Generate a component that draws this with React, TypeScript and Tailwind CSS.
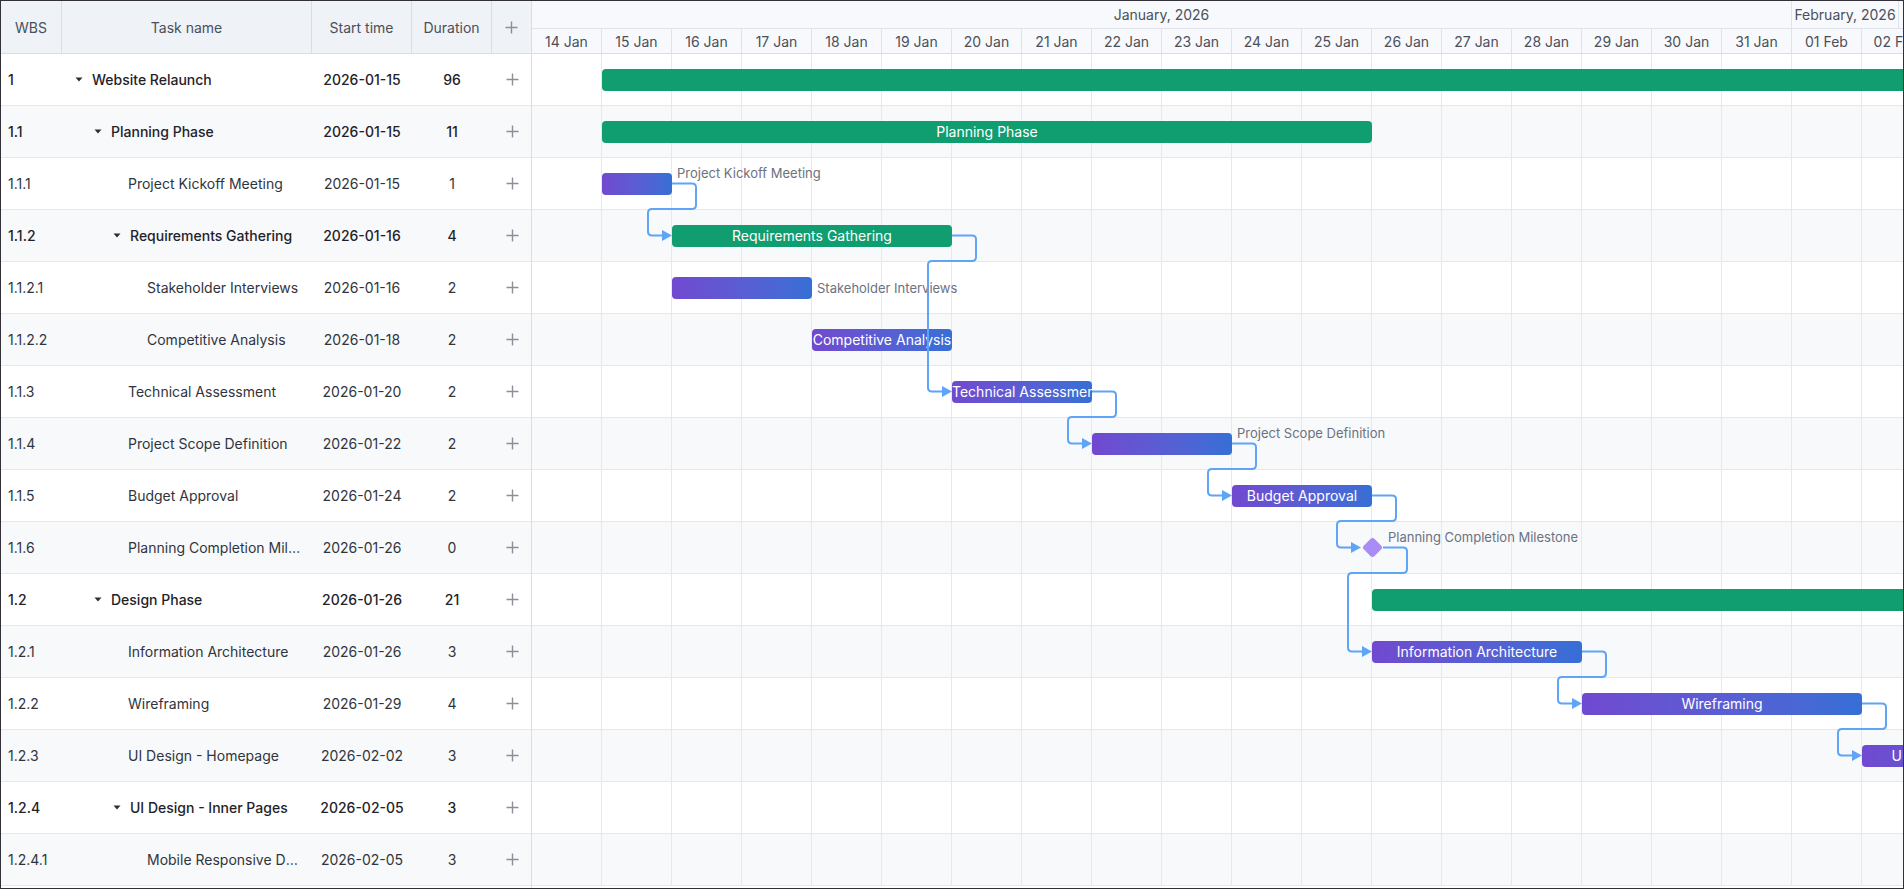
import type { ReactNode } from 'react';

type Task = {
  wbs: string;
  name: string;
  start: string;
  dur: number;
  level: number;
  parent?: boolean;
  milestone?: boolean;
  label?: 'up' | 'mid';
};

const TASKS: Task[] = [
  { wbs: '1', name: 'Website Relaunch', start: '2026-01-15', dur: 96, level: 0, parent: true },
  { wbs: '1.1', name: 'Planning Phase', start: '2026-01-15', dur: 11, level: 1, parent: true },
  { wbs: '1.1.1', name: 'Project Kickoff Meeting', start: '2026-01-15', dur: 1, level: 2, label: 'up' },
  { wbs: '1.1.2', name: 'Requirements Gathering', start: '2026-01-16', dur: 4, level: 2, parent: true },
  { wbs: '1.1.2.1', name: 'Stakeholder Interviews', start: '2026-01-16', dur: 2, level: 3, label: 'mid' },
  { wbs: '1.1.2.2', name: 'Competitive Analysis', start: '2026-01-18', dur: 2, level: 3 },
  { wbs: '1.1.3', name: 'Technical Assessment', start: '2026-01-20', dur: 2, level: 2 },
  { wbs: '1.1.4', name: 'Project Scope Definition', start: '2026-01-22', dur: 2, level: 2, label: 'up' },
  { wbs: '1.1.5', name: 'Budget Approval', start: '2026-01-24', dur: 2, level: 2 },
  { wbs: '1.1.6', name: 'Planning Completion Milestone', start: '2026-01-26', dur: 0, level: 2, milestone: true, label: 'up' },
  { wbs: '1.2', name: 'Design Phase', start: '2026-01-26', dur: 21, level: 1, parent: true },
  { wbs: '1.2.1', name: 'Information Architecture', start: '2026-01-26', dur: 3, level: 2 },
  { wbs: '1.2.2', name: 'Wireframing', start: '2026-01-29', dur: 4, level: 2 },
  { wbs: '1.2.3', name: 'UI Design - Homepage', start: '2026-02-02', dur: 3, level: 2 },
  { wbs: '1.2.4', name: 'UI Design - Inner Pages', start: '2026-02-05', dur: 3, level: 2, parent: true },
  { wbs: '1.2.4.1', name: 'Mobile Responsive Design', start: '2026-02-05', dur: 3, level: 3 },
];

// source row -> target row
const LINKS: [number, number][] = [
  [2, 3],
  [3, 6],
  [6, 7],
  [7, 8],
  [8, 9],
  [9, 11],
  [11, 12],
  [12, 13],
];

const DAYS = [
  '14 Jan', '15 Jan', '16 Jan', '17 Jan', '18 Jan', '19 Jan', '20 Jan', '21 Jan', '22 Jan', '23 Jan',
  '24 Jan', '25 Jan', '26 Jan', '27 Jan', '28 Jan', '29 Jan', '30 Jan', '31 Jan', '01 Feb', '02 Feb',
];

const DAY_W = 70;
const ROW_H = 52;
const DIAMOND = 11;

const offsetOf = (d: string) => Math.round((Date.parse(d) - Date.parse('2026-01-14')) / 86400000);

function PlusIcon() {
  return (
    <svg width="13" height="13" viewBox="0 0 13 13" className="text-[#8b9098]">
      <path d="M6.5 0.5v12M0.5 6.5h12" stroke="currentColor" strokeWidth="1.4" />
    </svg>
  );
}

function Caret() {
  return (
    <svg width="8" height="5" viewBox="0 0 8 5" className="text-[#2b2f36]">
      <path d="M0.5 0.5h7l-3.5 4z" fill="currentColor" />
    </svg>
  );
}

function HeadCell({ w, children }: { w: string; children: ReactNode }) {
  return (
    <div className={`${w} shrink-0 h-full flex items-center justify-center border-r border-[#d9dde4]`}>
      {children}
    </div>
  );
}

function roundedPath(pts: number[][], r: number) {
  let d = `M${pts[0][0]},${pts[0][1]}`;
  for (let i = 1; i < pts.length - 1; i++) {
    const [px, py] = pts[i - 1];
    const [cx, cy] = pts[i];
    const [nx, ny] = pts[i + 1];
    const l1 = Math.hypot(cx - px, cy - py);
    const l2 = Math.hypot(nx - cx, ny - cy);
    const rr = Math.min(r, l1 / 2, l2 / 2);
    const ax = cx - ((cx - px) / l1) * rr;
    const ay = cy - ((cy - py) / l1) * rr;
    const bx = cx + ((nx - cx) / l2) * rr;
    const by = cy + ((ny - cy) / l2) * rr;
    d += ` L${ax},${ay} Q${cx},${cy} ${bx},${by}`;
  }
  const last = pts[pts.length - 1];
  d += ` L${last[0]},${last[1]}`;
  return d;
}

function Links() {
  return (
    <svg className="absolute left-0 top-0 pointer-events-none" width={2400} height={ROW_H * TASKS.length}>
      {LINKS.map(([s, t]) => {
        const src = TASKS[s];
        const tgt = TASKS[t];
        const sx = src.milestone ? offsetOf(src.start) * DAY_W + DIAMOND : (offsetOf(src.start) + src.dur) * DAY_W;
        const tx = tgt.milestone ? offsetOf(tgt.start) * DAY_W - DIAMOND : offsetOf(tgt.start) * DAY_W;
        const sy = s * ROW_H + 25.5;
        const ty = t * ROW_H + 25.5;
        const by = (s + 1) * ROW_H - 1;
        const pts = [
          [sx, sy],
          [sx + 24, sy],
          [sx + 24, by],
          [tx - 24, by],
          [tx - 24, ty],
          [tx - 8, ty],
        ];
        return (
          <g key={`${s}-${t}`}>
            <path d={roundedPath(pts, 4)} fill="none" stroke="#5ea4f7" strokeWidth="2" />
            <polygon points={`${tx},${ty} ${tx - 10},${ty - 5.5} ${tx - 10},${ty + 5.5}`} fill="#5ea4f7" />
          </g>
        );
      })}
    </svg>
  );
}

function ChartRow({ task, index }: { task: Task; index: number }) {
  const left = offsetOf(task.start) * DAY_W;
  const width = task.dur * DAY_W;
  const stripe = index % 2 === 1 ? 'bg-[#f8f9fb]' : 'bg-white';
  const labelTop = task.label === 'up' ? 7 : 18;
  const labelLeft = task.milestone ? left + DIAMOND + 5 : left + width + 5;

  return (
    <div className={`relative h-[52px] flex border-b border-[#e6e8ec] ${stripe}`}>
      {DAYS.map((d) => (
        <div key={d} className="w-[70px] shrink-0 h-full border-r border-[#e6e8ec]" />
      ))}
      {task.milestone ? (
        <div
          className="absolute top-[18px] w-[15px] h-[15px] rotate-45 rounded-[3px] bg-[#a98cf6]"
          style={{ left: left - 7.5 }}
        />
      ) : (
        <div
          className={`absolute top-[15px] h-[22px] rounded-[4px] overflow-hidden whitespace-nowrap text-center text-white text-[14px] leading-[22px] ${
            task.parent ? 'bg-[#109d6f]' : 'bg-linear-to-r from-[#7049d0] to-[#356fd6]'
          }`}
          style={{ left, width }}
        >
          {task.label ? '' : task.name}
        </div>
      )}
      {task.label && (
        <div
          className="absolute text-[13px] leading-4 text-[#6b7280] whitespace-nowrap"
          style={{ left: labelLeft, top: labelTop }}
        >
          {task.name}
        </div>
      )}
    </div>
  );
}

function GridRow({ task, index }: { task: Task; index: number }) {
  const stripe = index % 2 === 1 ? 'bg-[#f8f9fb]' : 'bg-white';
  const strong = task.parent ? 'font-medium text-[#1f2329]' : 'text-[#30353d]';
  return (
    <div className={`h-[52px] flex items-center border-b border-[#e6e8ec] text-[14px] ${stripe} ${strong}`}>
      <div className="w-[61px] shrink-0 pl-[7px]">{task.wbs}</div>
      <div className="w-[250px] shrink-0 flex items-center pr-[10px] min-w-0" style={{ paddingLeft: 13 + task.level * 19 }}>
        {task.parent ? (
          <>
            <span className="w-[17px] shrink-0 flex">
              <Caret />
            </span>
            <span className="truncate">{task.name}</span>
          </>
        ) : (
          <span className="truncate pl-[15px]">{task.name}</span>
        )}
      </div>
      <div className="w-[100px] shrink-0 text-center">{task.start}</div>
      <div className="w-[80px] shrink-0 text-center">{task.dur}</div>
      <div className="w-[40px] shrink-0 flex justify-center">
        <PlusIcon />
      </div>
    </div>
  );
}

export default function App() {
  return (
    <div
      className="w-[1904px] h-[889px] border border-[#34303a] bg-white flex overflow-hidden"
      style={{ fontFamily: 'Inter, "Noto Sans", sans-serif' }}
    >
      {/* grid */}
      <div className="w-[531px] shrink-0 border-r border-[#d9dde4] flex flex-col">
        <div className="h-[53px] shrink-0 flex bg-[#eff2f7] border-b border-[#d9dde4] text-[14px] text-[#4a505a]">
          <HeadCell w="w-[61px]">WBS</HeadCell>
          <HeadCell w="w-[250px]">Task name</HeadCell>
          <HeadCell w="w-[100px]">Start time</HeadCell>
          <HeadCell w="w-[80px]">Duration</HeadCell>
          <div className="w-[39px] shrink-0 h-full flex items-center justify-center">
            <PlusIcon />
          </div>
        </div>
        {TASKS.map((t, i) => (
          <GridRow key={t.wbs} task={t} index={i} />
        ))}
      </div>

      {/* chart */}
      <div className="flex-1 min-w-0 overflow-hidden flex flex-col">
        <div className="h-[53px] shrink-0 flex flex-col bg-[#f8f9fc] border-b border-[#d9dde4] text-[14px] text-[#4a505a]">
          <div className="h-[28px] shrink-0 flex border-b border-[#dfe2e8]">
            <div className="w-[1260px] shrink-0 flex items-center justify-center border-r border-[#dfe2e8]">January, 2026</div>
            <div className="w-[107px] shrink-0 flex items-center justify-center border-r border-[#dfe2e8]">February, 2026</div>
          </div>
          <div className="flex-1 flex">
            {DAYS.map((d) => (
              <div key={d} className="w-[70px] shrink-0 flex items-center justify-center border-r border-[#dfe2e8]">
                {d}
              </div>
            ))}
          </div>
        </div>
        <div className="relative">
          {TASKS.map((t, i) => (
            <ChartRow key={t.wbs} task={t} index={i} />
          ))}
          <Links />
        </div>
      </div>
    </div>
  );
}
